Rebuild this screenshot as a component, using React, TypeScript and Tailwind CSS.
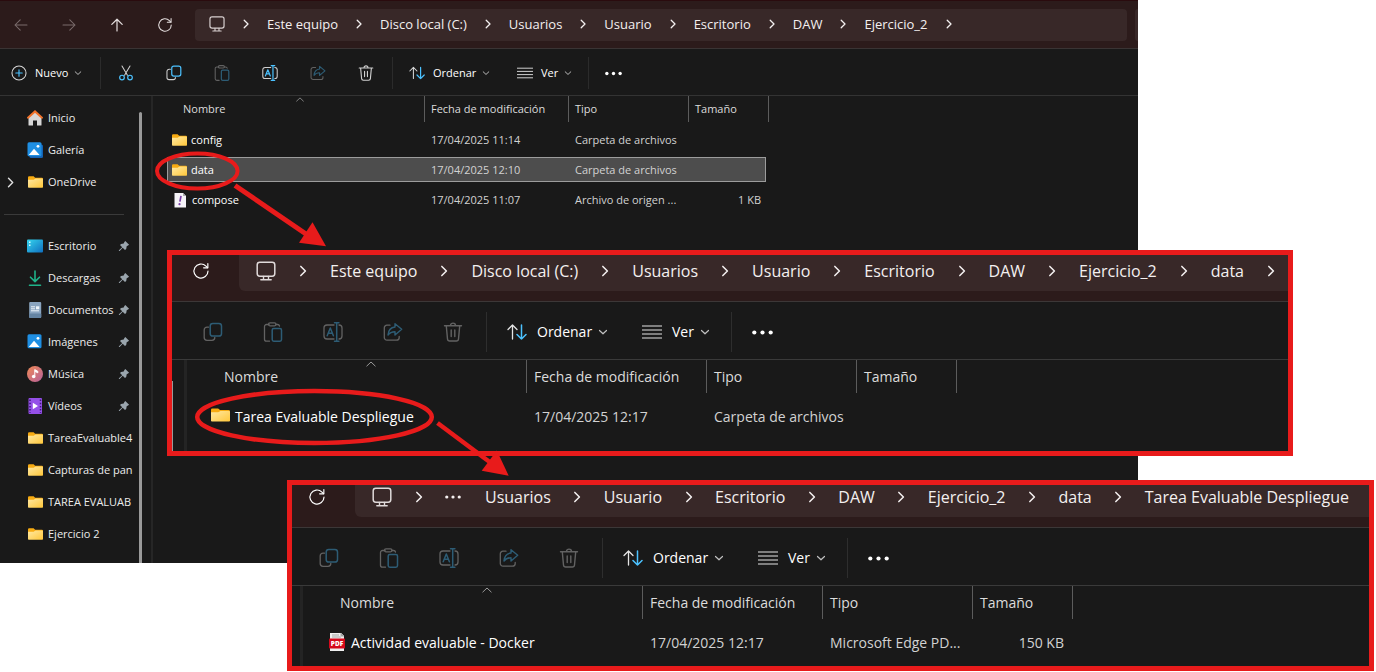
import type { ReactNode } from "react";

const ACCENT = "#4cc2ff";

type IconProps = { className?: string };

function Svg({ className = "", children, box = "0 0 20 20" }: { className?: string; children: ReactNode; box?: string }) {
  return (
    <svg viewBox={box} className={"shrink-0 " + className} fill="none" stroke="currentColor" strokeLinecap="round" strokeLinejoin="round" aria-hidden="true">
      {children}
    </svg>
  );
}

/* ---------- line icons ---------- */

const BackIcon = ({ className }: IconProps) => (
  <Svg className={className}><path d="M17.5 10H2.5M9 3.5 2.5 10 9 16.5" strokeWidth="1.3" /></Svg>
);
const ForwardIcon = ({ className }: IconProps) => (
  <Svg className={className}><path d="M2.5 10h15M11 3.5l6.5 6.5-6.5 6.5" strokeWidth="1.3" /></Svg>
);
const UpIcon = ({ className }: IconProps) => (
  <Svg className={className}><path d="M10 17.5V2.8M3.5 9.3 10 2.8l6.5 6.5" strokeWidth="1.5" /></Svg>
);
const RefreshIcon = ({ className }: IconProps) => (
  <Svg className={className}>
    <path d="M17.8 10a7.800 7.800 0 1 1-2.300-5.500L17.300 6.300" strokeWidth="1.3" />
    <path d="M17.600 1.800v4.700h-4.700" strokeWidth="1.3" />
  </Svg>
);
const MonitorIcon = ({ className }: IconProps) => (
  <Svg className={className}>
    <rect x="1.2" y="1.2" width="17.6" height="14" rx="2.6" strokeWidth="1.5" />
    <path d="M7.5 15.500v3M12.500 15.500v3M4.800 18.700h10.400" strokeWidth="1.400" />
  </Svg>
);
const ChevronRight = ({ className }: IconProps) => (
  <Svg className={className} box="0 0 10 10"><path d="M3.200 1.200 7 5 3.200 8.800" strokeWidth="1.300" /></Svg>
);
const ChevronDown = ({ className }: IconProps) => (
  <Svg className={className} box="0 0 10 10"><path d="M1.500 3.500 5 6.800l3.500-3.300" strokeWidth="1.200" /></Svg>
);
const ChevronUp = ({ className }: IconProps) => (
  <Svg className={className} box="0 0 10 6"><path d="M.8 5 5 1l4.200 4" strokeWidth=".9" /></Svg>
);
const PlusIcon = ({ className }: IconProps) => (
  <Svg className={className}>
    <circle cx="10" cy="10" r="8.800" strokeWidth="1.300" />
    <path d="M10 6v8M6 10h8" stroke={ACCENT} strokeWidth="1.400" />
  </Svg>
);
const CutIcon = ({ className }: IconProps) => (
  <Svg className={className}>
    <path d="M5 1.200l6.800 11.600M15 1.200 8.200 12.800" strokeWidth="1.300" />
    <g stroke={ACCENT} strokeWidth="1.500">
      <circle cx="5" cy="15.700" r="2.900" />
      <circle cx="15" cy="15.700" r="2.900" />
    </g>
  </Svg>
);
const CopyIcon = ({ className }: IconProps) => (
  <Svg className={className}>
    <path d="M5.500 5.200H4A2.800 2.800 0 0 0 1.200 8v7.500A2.800 2.800 0 0 0 4 18.300h5a2.800 2.800 0 0 0 2.800-2.800" strokeWidth="1.300" />
    <rect x="7.200" y="1.500" width="11.300" height="12.500" rx="2.600" stroke={ACCENT} strokeWidth="1.500" />
  </Svg>
);
const PasteIcon = ({ className }: IconProps) => (
  <Svg className={className}>
    <path d="M6 2.500H3.500A2 2 0 0 0 1.500 4.500v12.700a2 2 0 0 0 2 2h3M13 2.500h1.500a2 2 0 0 1 2 1.500" strokeWidth="1.300" />
    <rect x="5.500" y=".8" width="7.500" height="3" rx="1.500" strokeWidth="1.300" />
    <rect x="9.200" y="6.500" width="9.300" height="12.700" rx="1.600" stroke={ACCENT} strokeWidth="1.500" />
  </Svg>
);
const RenameIcon = ({ className }: IconProps) => (
  <Svg className={className}>
    <path d="M11 3H4a3 3 0 0 0-3 3v8a3 3 0 0 0 3 3h7M16 3a3 3 0 0 1 3 3v8a3 3 0 0 1-3 3" strokeWidth="1.300" />
    <g stroke={ACCENT} strokeWidth="1.500">
      <path d="M13.700.8v18.400M11.500.8h4.400M11.500 19.200h4.400" />
      <path d="M4.200 13.700 7.300 6l3.100 7.700M5.300 11.200h4" />
    </g>
  </Svg>
);
const ShareIcon = ({ className }: IconProps) => (
  <Svg className={className}>
    <path d="M7 3.200H4A2.700 2.700 0 0 0 1.300 6v9.500A2.700 2.700 0 0 0 4 18.200h9.500a2.700 2.700 0 0 0 2.700-2.700v-1" strokeWidth="1.300" />
    <path d="M12 1.700 18.700 7.300 12 13V9.700c-3.500 0-5.500 1.200-7 3.300.3-4 2.500-7.500 7-8z" stroke={ACCENT} strokeWidth="1.400" />
  </Svg>
);
const TrashIcon = ({ className }: IconProps) => (
  <Svg className={className}>
    <path d="M1.500 3.800h17M7.500 3.600a2.500 2.500 0 0 1 5 0M3.300 4l1.200 13a2.200 2.200 0 0 0 2.200 2h6.600a2.200 2.200 0 0 0 2.200-2l1.200-13M8.200 8v6.500M11.800 8v6.500" strokeWidth="1.400" />
  </Svg>
);
const SortIcon = ({ className }: IconProps) => (
  <Svg className={className}>
    <path d="M5.500 17V3M1 7.500 5.500 3 10 7.500" strokeWidth="1.300" />
    <path d="M14.500 3v14M10 12.500l4.500 4.500 4.500-4.500" stroke={ACCENT} strokeWidth="1.500" />
  </Svg>
);
const ListIcon = ({ className }: IconProps) => (
  <Svg className={className}><path d="M.5 4h19M.5 8h19M.5 12h19M.5 16h19" strokeWidth="1.200" /></Svg>
);
const DotsIcon = ({ className }: IconProps) => (
  <Svg className={className}>
    <g fill="currentColor" stroke="none">
      <circle cx="2.200" cy="10" r="2" /><circle cx="10" cy="10" r="2" /><circle cx="17.800" cy="10" r="2" />
    </g>
  </Svg>
);
const PinIcon = () => (
  <svg viewBox="0 0 12 12" className="size-3 shrink-0" fill="#9aa5ad" aria-hidden="true">
    <path d="M7.300.9 11.100 4.700 10 5.600 8.700 6.300 8.200 8.900 7 10 4.700 7.700 1.600 11 .9 11 .9 10.300 4.200 7.200 2 5 3.100 3.900 5.700 3.400 6.400 2z" />
  </svg>
);

/* ---------- coloured icons ---------- */

const FolderIcon = ({ className }: IconProps) => (
  <svg viewBox="0 0 20 17" className={"shrink-0 " + className} preserveAspectRatio="none" aria-hidden="true">
    <defs>
      <linearGradient id="folder-front" x1="0" y1="0" x2="1" y2="1">
        <stop offset="0" stopColor="#ffe9a4" /><stop offset="1" stopColor="#ffc73a" />
      </linearGradient>
    </defs>
    <path d="M1.500 .5h6L9.500 2.500H18.500a1.500 1.500 0 0 1 1.500 1.500V8H0V2a1.500 1.500 0 0 1 1.500-1.500z" fill="#f7ab12" />
    <path d="M0 5.300h7.500L10 3.500H19a1 1 0 0 1 1 1v11a1 1 0 0 1-1 1H1a1 1 0 0 1-1-1z" fill="url(#folder-front)" />
  </svg>
);
const HomeIcon = () => (
  <svg viewBox="0 0 16 16" className="size-4 shrink-0" aria-hidden="true">
    <path d="M1.500 7 8 1.500 14.500 7v8a.6.6 0 0 1-.6.6H10V10.500H6v5.100H2.100a.6.600 0 0 1-.6-.6z" fill="#d7d7d7" />
    <path d="M1 7.700 8 1.400l7 6.300" fill="none" stroke="#f0722b" strokeWidth="2" strokeLinecap="round" />
  </svg>
);
const PictureIcon = ({ stacked = false }: { stacked?: boolean }) => (
  <svg viewBox="0 0 16 16" className="size-4 shrink-0" aria-hidden="true">
    {stacked && <rect x="2.500" y="2.500" width="13.500" height="13.500" rx="1.500" fill="#1463b5" />}
    <rect x=".5" y=".3" width="14" height="14" rx="1.500" fill="#1f8fe3" />
    <path d="M1.800 13 7 6.800 12.600 13z" fill="#fff" />
    <circle cx="11" cy="4.300" r="1.400" fill="#fff" />
  </svg>
);
const DesktopIcon = () => (
  <svg viewBox="0 0 16 16" className="size-4 shrink-0" aria-hidden="true">
    <defs>
      <linearGradient id="desk" x1="0" y1="0" x2="1" y2="1">
        <stop offset="0" stopColor="#35d5ee" /><stop offset="1" stopColor="#0f6fc0" />
      </linearGradient>
    </defs>
    <rect x="0" y="1.500" width="16" height="13" rx="1" fill="url(#desk)" />
    <path d="M2 3.500h1.500v1.500H2zM2 6.500h1.500V8H2z" fill="#d6fbff" />
  </svg>
);
const DownloadIcon = () => (
  <svg viewBox="0 0 16 16" className="size-4 shrink-0" fill="none" stroke="#1fb389" strokeWidth="1.600" strokeLinecap="round" strokeLinejoin="round" aria-hidden="true">
    <path d="M8 1v10.500M3.500 7.200 8 11.600l4.500-4.400M2.500 15.200h11" />
  </svg>
);
const DocumentIcon = () => (
  <svg viewBox="0 0 16 16" className="size-4 shrink-0" aria-hidden="true">
    <rect x="2.200" y="0" width="12" height="16" rx="1" fill="#8aa5c0" />
    <rect x="2.200" y="11.500" width="12" height="4.500" rx="1" fill="#6484a3" />
    <path d="M4 4.800h4M4 6.800h4M4 8.800h8" stroke="#eef5fb" strokeWidth="1" />
    <rect x="9" y="4.300" width="3.300" height="3" fill="#eef5fb" />
  </svg>
);
const MusicIcon = () => (
  <svg viewBox="0 0 16 16" className="size-4 shrink-0" aria-hidden="true">
    <defs>
      <linearGradient id="music" x1="0" y1="0" x2="1" y2="1">
        <stop offset="0" stopColor="#f08a55" /><stop offset="1" stopColor="#b5609c" />
      </linearGradient>
    </defs>
    <circle cx="8" cy="8" r="8" fill="url(#music)" />
    <path d="M7.800 3.500v6.300M7.800 3.700l3 1.600v1.500l-3-1.500" fill="#fff" stroke="#fff" strokeWidth="1" />
    <circle cx="6.700" cy="10.500" r="1.800" fill="#fff" />
  </svg>
);
const VideoIcon = () => (
  <svg viewBox="0 0 16 16" className="size-4 shrink-0" aria-hidden="true">
    <rect x="1.500" y="0" width="13.500" height="16" rx="1" fill="#9550e8" />
    <path d="M3 1.500v13.500M13.500 1.500v13.500" stroke="#3d1a78" strokeWidth="1.500" strokeDasharray="1.500 1.700" />
    <path d="M5.800 4.800v6.400L11 8z" fill="#fff" />
  </svg>
);
const ComposeIcon = () => (
  <svg viewBox="0 0 16 16" className="mb-0.5 size-4 shrink-0" aria-hidden="true">
    <path d="M2.500 1h8.500l3 3v11.500H2.500z" fill="#f5f3f8" />
    <path d="M11 1v3h3z" fill="#a9a9ad" />
    <path d="M9 3.800 7.900 9.700" stroke="#7b3fa8" strokeWidth="1.700" />
    <circle cx="7.500" cy="12.200" r="1.100" fill="#7b3fa8" />
  </svg>
);
const PdfIcon = () => (
  <svg viewBox="0 0 16 18" className="mb-[3px] h-[18px] w-4 shrink-0" aria-hidden="true">
    <path d="M1 0h11l3 3v15H1z" fill="#efefef" />
    <path d="M12 0v3h3zM3 2h7M3 4h9" fill="#999" stroke="#a5a5a5" strokeWidth="1" />
    <rect x="0" y="5.500" width="16" height="10" rx=".8" fill="#d5091c" />
    <text x="8" y="13" textAnchor="middle" fontFamily="Open Sans, sans-serif" fontWeight="800" fontSize="6.500" fill="#fff">PDF</text>
  </svg>
);

/* ---------- shared window parts ---------- */

type Size = "sm" | "lg";

function AddressBar({ crumbs, size, collapsed = false, trailing = true, className }: {
  crumbs: string[]; size: Size; collapsed?: boolean; trailing?: boolean; className: string;
}) {
  const sm = size === "sm";
  const slot = sm ? "w-[42px]" : collapsed ? "w-[53px]" : "w-[54px]";
  const chevron = sm ? "size-[10px]" : "size-3";
  return (
    <nav aria-label="Ruta" className={"flex min-w-0 flex-1 items-center overflow-hidden bg-[#382828] whitespace-nowrap text-[#f4f0f0] " + className}>
      <MonitorIcon className={sm ? "size-4 text-[#d8d0d0]" : "size-5 text-[#e0dada]"} />
      <ol className="flex items-center">
        {collapsed && (
          <li className="flex items-center">
            <span className={"flex justify-center " + slot}><ChevronRight className={chevron} /></span>
            <button type="button" aria-label="Más carpetas" className="flex w-10 items-center"><DotsIcon className="size-4" /></button>
          </li>
        )}
        {crumbs.map((c, i) => (
          <li key={c} className="flex items-center">
            {!(collapsed && i === 0) && <span className={"flex justify-center " + slot}><ChevronRight className={chevron} /></span>}
            <a href="#" className={sm ? "text-[13px] leading-5" : "text-base leading-6"}>{c}</a>
          </li>
        ))}
        {trailing && <li className={"flex justify-center " + slot}><ChevronRight className={chevron} /></li>}
      </ol>
    </nav>
  );
}

function ToolButton({ label, active, size, children }: { label: string; active: boolean; size: Size; children: ReactNode }) {
  return (
    <button type="button" aria-label={label} className={"flex justify-center text-[#d0d0d0] " + (size === "sm" ? "w-12 " : "w-[60px] ") + (active ? "" : "opacity-40")}>
      {children}
    </button>
  );
}

function MenuButton({ label, size, icon, className }: { label: string; size: Size; icon: ReactNode; className: string }) {
  const sm = size === "sm";
  return (
    <button type="button" className={"flex items-center text-white " + (sm ? "gap-2 text-[11px] leading-4 " : "gap-[10px] text-sm ") + className}>
      {icon}
      <span className="flex items-center gap-1.5">
        {label}
        <ChevronDown className={sm ? "size-2 text-[#c0c0c0]" : "size-[10px] text-[#c0c0c0]"} />
      </span>
    </button>
  );
}

function SortAndView({ size }: { size: Size }) {
  const sm = size === "sm";
  const icon = sm ? "size-4 text-[#d8d8d8]" : "size-5 text-[#e4e4e4]";
  const rule = sm ? "h-8 w-px bg-[#2b2b2b]" : "h-10 w-px bg-[#2e2e2e]";
  return (
    <>
      <span className={rule + (sm ? " ml-[2px] mr-4" : " ml-[3px] mr-5")} />
      <MenuButton label="Ordenar" size={size} icon={<SortIcon className={icon} />} className={sm ? "w-[108px]" : "w-[135px]"} />
      <MenuButton label="Ver" size={size} icon={<ListIcon className={icon} />} className={sm ? "w-[71px]" : "w-[89px]"} />
      <span className={rule + (sm ? " mr-4" : " mr-5")} />
      <button type="button" aria-label="Ver más" className="text-white"><DotsIcon className={sm ? "size-[17px]" : "size-[21px]"} /></button>
    </>
  );
}

function FileTools({ size, active, canCut }: { size: Size; active: string[]; canCut?: boolean }) {
  const s = size === "sm" ? "size-4" : "size-5";
  const on = (k: string) => active.includes(k);
  return (
    <>
      {canCut && <ToolButton label="Cortar" size={size} active><CutIcon className={s} /></ToolButton>}
      <ToolButton label="Copiar" size={size} active={on("copy")}><CopyIcon className={s} /></ToolButton>
      <ToolButton label="Pegar" size={size} active={on("paste")}><PasteIcon className={s} /></ToolButton>
      <ToolButton label="Cambiar nombre" size={size} active={on("rename")}><RenameIcon className={s} /></ToolButton>
      <ToolButton label="Compartir" size={size} active={on("share")}><ShareIcon className={s} /></ToolButton>
      <ToolButton label="Eliminar" size={size} active={on("delete")}><TrashIcon className={s} /></ToolButton>
    </>
  );
}

type FileRow = { icon: ReactNode; name: string; date: string; kind: string; size?: string; selected?: boolean };

function FileTable({ rows, size }: { rows: FileRow[]; size: Size }) {
  const sm = size === "sm";
  const cols = sm ? "grid grid-cols-[258px_144px_120px_80px]" : "grid grid-cols-[340px_180px_150px_100px]";
  const th = "border-r border-[#5c5c5c] text-left font-normal text-[#dcdcdc] " + (sm ? "h-[26px] pl-[6px] leading-[26px]" : "h-[33px] pl-[7px] leading-[33px]");
  const td = "truncate text-[#d2d2d2] " + (sm ? "pl-[6px]" : "pl-[7px]");
  return (
    <table className={"block whitespace-nowrap " + (sm ? "ml-[14px] text-[11px]" : "text-sm")}>
      <thead className="block">
        <tr className={cols}>
          <th scope="col" className={"relative border-r border-[#5c5c5c] text-left font-normal text-[#dcdcdc] " + (sm ? "h-[26px] pl-4 leading-[26px]" : "h-[33px] pl-[37px] leading-[33px]")}>
            Nombre
            <ChevronUp className={"absolute top-px text-[#a8a8a8] " + (sm ? "left-[129px] h-[5px] w-2" : "left-[179px] h-[6px] w-[10px]")} />
          </th>
          <th scope="col" className={th}>Fecha de modificación</th>
          <th scope="col" className={th}>Tipo</th>
          <th scope="col" className={th}>Tamaño</th>
        </tr>
      </thead>
      <tbody className={"flex flex-col " + (sm ? "w-[599px] gap-[5px] pt-[5px]" : "pt-2")}>
        {rows.map((r) => (
          <tr key={r.name} className={cols + " items-center " + (sm ? "h-[25px] pt-0.5 " : "h-8 ") + (r.selected ? "bg-[#4d4d4d] outline outline-1 -outline-offset-1 outline-[#9c9c9c]" : "")}>
            <td className={"flex items-center text-white " + (sm ? "gap-1 pl-[5px]" : "gap-[5px] pl-6")}>
              {r.icon}
              <span>{r.name}</span>
            </td>
            <td className={td}>{r.date}</td>
            <td className={td}>{r.kind}</td>
            <td className={"text-right text-[#d2d2d2] " + (sm ? "pr-2" : "pr-[9px]")}>{r.size}</td>
          </tr>
        ))}
      </tbody>
    </table>
  );
}

/* ---------- main window ---------- */

type Place = { label: string; icon: ReactNode; pinned?: boolean; expandable?: boolean };

const fileFolder = <FolderIcon className="mb-0.5 h-3 w-[15px]" />;
const placeFolder = <span className="flex w-4 justify-center"><FolderIcon className="h-3 w-[15px]" /></span>;

const TOP_PLACES: Place[] = [
  { label: "Inicio", icon: <HomeIcon /> },
  { label: "Galería", icon: <PictureIcon stacked /> },
  { label: "OneDrive", icon: placeFolder, expandable: true },
];
const QUICK_PLACES: Place[] = [
  { label: "Escritorio", icon: <DesktopIcon />, pinned: true },
  { label: "Descargas", icon: <DownloadIcon />, pinned: true },
  { label: "Documentos", icon: <DocumentIcon />, pinned: true },
  { label: "Imágenes", icon: <PictureIcon />, pinned: true },
  { label: "Música", icon: <MusicIcon />, pinned: true },
  { label: "Vídeos", icon: <VideoIcon />, pinned: true },
  { label: "TareaEvaluable4", icon: placeFolder },
  { label: "Capturas de pan", icon: placeFolder },
  { label: "TAREA EVALUAB", icon: placeFolder },
  { label: "Ejercicio 2", icon: placeFolder },
];

function PlaceRow({ place }: { place: Place }) {
  return (
    <li className="flex h-8 items-center">
      <span className="flex w-[27px] pl-[5px]">{place.expandable && <ChevronRight className="size-[11px] text-[#e0e0e0]" />}</span>
      <a href="#" className="flex min-w-0 flex-1 items-center gap-[5px] overflow-hidden whitespace-nowrap">
        {place.icon}
        <span>{place.label}</span>
      </a>
      {place.pinned && <span className="pr-[3px]"><PinIcon /></span>}
    </li>
  );
}

function Sidebar() {
  return (
    <aside className="flex w-[151px] shrink-0 text-[11px] leading-4 text-[#ececec]">
      <div className="w-[133px] pt-[6px] pb-[13px]">
        <ul>{TOP_PLACES.map((p) => <PlaceRow key={p.label} place={p} />)}</ul>
        <div className="flex h-8 items-center pr-[9px] pl-1"><hr className="w-full border-[#3a3a3a]" /></div>
        <ul>{QUICK_PLACES.map((p) => <PlaceRow key={p.label} place={p} />)}</ul>
      </div>
      <div className="mt-4 ml-[6px] w-[3px] rounded-t bg-[#9a9a9a]" />
    </aside>
  );
}

function MainWindow() {
  return (
    <section className="w-[1138px] bg-[#191919]">
      <header className="flex h-[49px] items-center overflow-hidden border-t border-b border-t-[#2a0b0e] border-b-[#3a3434] bg-[#2c1b1b]">
        <div className="flex w-[195px] shrink-0 text-[#e4dede]">
          <button type="button" aria-label="Atrás" className="flex w-[42px] justify-center text-[#7a6c6c]"><BackIcon className="size-4" /></button>
          <button type="button" aria-label="Adelante" className="ml-[3px] flex w-12 justify-center text-[#7a6c6c]"><ForwardIcon className="size-4" /></button>
          <button type="button" aria-label="Subir" className="flex w-12 justify-center"><UpIcon className="size-4" /></button>
          <button type="button" aria-label="Actualizar" className="flex w-12 justify-center"><RefreshIcon className="size-4" /></button>
        </div>
        <AddressBar size="sm" className="h-8 rounded pb-0.5 pl-[14px]" crumbs={["Este equipo", "Disco local (C:)", "Usuarios", "Usuario", "Escritorio", "DAW", "Ejercicio_2"]} />
        <div className="ml-2 h-8 w-[3px] rounded-l bg-[#382828]" />
      </header>
      <div className="flex h-[47px] items-center border-b border-[#333] pt-0.5">
        <MenuButton label="Nuevo" size="sm" icon={<PlusIcon className="size-4 text-[#d8d8d8]" />} className="ml-[11px] w-[89px]" />
        <span className="mr-px h-8 w-px bg-[#2b2b2b]" />
        <FileTools size="sm" canCut active={["copy", "rename", "delete"]} />
        <SortAndView size="sm" />
      </div>
      <div className="flex">
        <Sidebar />
        <div className="w-[2px] shrink-0 bg-[#262626]" />
        <div className="min-w-0 flex-1">
          <FileTable
            size="sm"
            rows={[
              { icon: fileFolder, name: "config", date: "17/04/2025 11:14", kind: "Carpeta de archivos" },
              { icon: fileFolder, name: "data", date: "17/04/2025 12:10", kind: "Carpeta de archivos", selected: true },
              { icon: <ComposeIcon />, name: "compose", date: "17/04/2025 11:07", kind: "Archivo de origen ...", size: "1 KB" },
            ]}
          />
        </div>
      </div>
    </section>
  );
}

/* ---------- framed detail windows ---------- */

function DetailWindow({ frame, inner, header, crumbs, collapsed, rows, scrollbar }: {
  frame: string; inner: string; header: string; crumbs: string[]; collapsed?: boolean; rows: FileRow[]; scrollbar?: boolean;
}) {
  return (
    <section className={"absolute overflow-hidden border-[5px] border-[#e81b1b] bg-[#191919] " + frame}>
      <div className={"flex h-full flex-col " + inner}>
        <header className={"flex shrink-0 items-end overflow-hidden border-b border-[#3c3737] bg-[#2c1b1b] pb-[10px] " + header}>
          <button type="button" aria-label="Actualizar" className="flex h-10 w-[67px] shrink-0 items-center pl-5 text-white"><RefreshIcon className="size-[18px]" /></button>
          <AddressBar size="lg" className="h-10 rounded-bl-md pl-[17px]" crumbs={crumbs} collapsed={collapsed} trailing={!collapsed} />
        </header>
        <div className="flex h-[58px] shrink-0 items-center border-b border-[#3a3a3a] pt-[3px] pl-[11px]">
          <FileTools size="lg" active={[]} />
          <SortAndView size="lg" />
        </div>
        <div className="flex flex-1">
          <div className="flex w-3 shrink-0 pt-[21px]">{scrollbar && <span className="w-px bg-[#9a9a9a]" />}</div>
          <div className="w-[3px] shrink-0 bg-[#242424]" />
          <FileTable size="lg" rows={rows} />
        </div>
      </div>
    </section>
  );
}

function Annotations() {
  return (
    <svg className="pointer-events-none absolute top-0 left-0 h-[672px] w-[1376px]" viewBox="0 0 1376 672" fill="none" stroke="#e81b1b" aria-hidden="true">
      <ellipse cx="197.300" cy="171" rx="40.300" ry="17.500" strokeWidth="4" />
      <path d="M235 185.500 306 234" strokeWidth="5" />
      <path d="M326 246.300 299 242.800 312.500 222.300z" fill="#e81b1b" stroke="none" />
      <ellipse cx="314.500" cy="417" rx="117.300" ry="26" strokeWidth="4.500" />
      <path d="M437.500 423 491 463" strokeWidth="4.500" />
      <path d="M508.700 475.700 481.700 470.800 496.800 450.500z" fill="#e81b1b" stroke="none" />
    </svg>
  );
}

export default function App() {
  return (
    <main className="relative min-h-screen overflow-hidden bg-white font-['Open_Sans','Noto_Sans',sans-serif]">
      <MainWindow />
      <DetailWindow
        frame="top-[250px] left-[167px] h-[206px] w-[1126px]"
        inner=""
        header="h-[47px]"
        scrollbar
        crumbs={["Este equipo", "Disco local (C:)", "Usuarios", "Usuario", "Escritorio", "DAW", "Ejercicio_2", "data"]}
        rows={[{ icon: <FolderIcon className="mb-1 h-[14px] w-[19px]" />, name: "Tarea Evaluable Despliegue", date: "17/04/2025 12:17", kind: "Carpeta de archivos" }]}
      />
      <DetailWindow
        frame="top-[480px] left-[287px] h-[191px] w-[1087px]"
        inner="-ml-1"
        header="h-[43px]"
        collapsed
        crumbs={["Usuarios", "Usuario", "Escritorio", "DAW", "Ejercicio_2", "data", "Tarea Evaluable Despliegue"]}
        rows={[{ icon: <span className="flex w-[19px] justify-center"><PdfIcon /></span>, name: "Actividad evaluable - Docker", date: "17/04/2025 12:17", kind: "Microsoft Edge PD...", size: "150 KB" }]}
      />
      <Annotations />
    </main>
  );
}
